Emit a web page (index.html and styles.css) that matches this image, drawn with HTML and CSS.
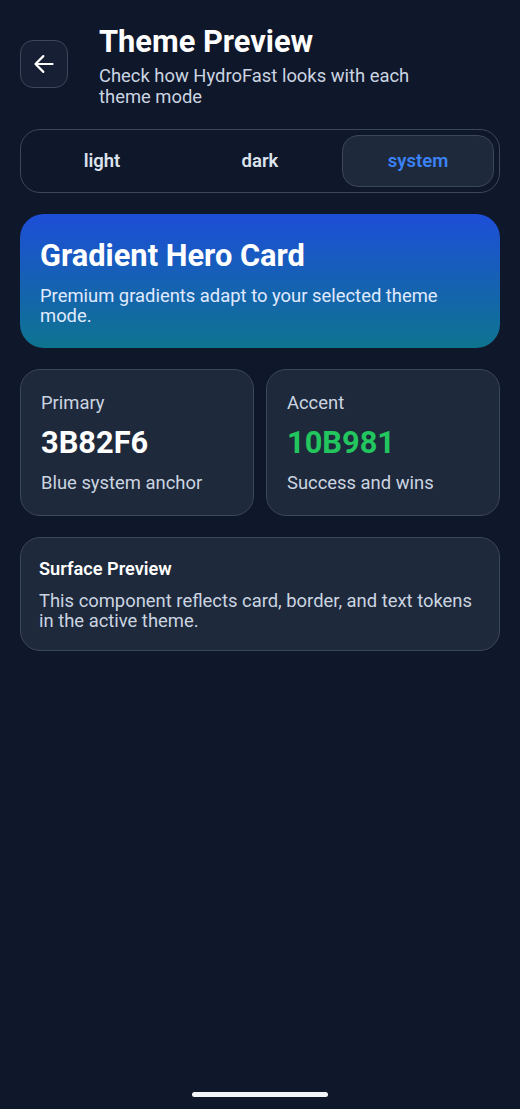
FILE: index.html
```html
<!DOCTYPE html>
<html lang="en">
<head>
<meta charset="utf-8">
<title>Theme Preview</title>
<link rel="stylesheet" href="styles.css">
</head>
<body>
<div class="screen">
  <header class="header">
    <button class="back" aria-label="Back">
      <svg width="28" height="28" viewBox="0 0 512 512" fill="none" stroke="#ffffff" stroke-width="40" stroke-linecap="round" stroke-linejoin="round"><path d="M244 400L100 256l144-144"/><path d="M120 256h292"/></svg>
    </button>
    <div class="head-text">
      <h1 class="title">Theme Preview</h1>
      <p class="subtitle">Check how HydroFast looks with each theme mode</p>
    </div>
  </header>

  <div class="segmented">
    <div class="seg">light</div>
    <div class="seg">dark</div>
    <div class="seg seg-active">system</div>
  </div>

  <section class="hero">
    <h2 class="hero-title">Gradient Hero Card</h2>
    <p class="hero-text">Premium gradients adapt to your selected theme mode.</p>
  </section>

  <div class="swatches">
    <div class="card swatch">
      <div class="sw-label">Primary</div>
      <div class="sw-value">3B82F6</div>
      <div class="sw-desc">Blue system anchor</div>
    </div>
    <div class="card swatch">
      <div class="sw-label">Accent</div>
      <div class="sw-value sw-green">10B981</div>
      <div class="sw-desc">Success and wins</div>
    </div>
  </div>

  <section class="card surface">
    <h3 class="surface-title">Surface Preview</h3>
    <p class="surface-text">This component reflects card, border, and text tokens in the active theme.</p>
  </section>

  <div class="spacer"></div>
  <div class="home-indicator"></div>
</div>
</body>
</html>
```

FILE: styles.css
```css
* { box-sizing: border-box; }
html, body {
  margin: 0;
  padding: 0;
  background: #0F172A;
  font-family: Roboto, "Noto Sans", "Liberation Sans", sans-serif;
  color: #F8FAFC;
}
.screen {
  width: 520px;
  height: 1109px;
  padding: 24px 20px 12px;
  display: flex;
  flex-direction: column;
}
.header {
  display: flex;
  align-items: flex-start;
  gap: 31px;
}
.back {
  margin-top: 16px;
  width: 48px;
  height: 48px;
  flex: none;
  border-radius: 13px;
  border: 1px solid #3B475A;
  background: #161F33;
  display: flex;
  align-items: center;
  justify-content: center;
  padding: 0;
}
.head-text { width: 335px; }
.title {
  margin: 0;
  font-size: 30.8px;
  line-height: 36px;
  font-weight: 700;
  color: #FFFFFF;
}
.subtitle {
  margin: 5px 0 0;
  font-size: 18.4px;
  line-height: 21px;
  color: #CBD5E1;
}
.segmented {
  margin-top: 22px;
  height: 64px;
  border: 1px solid #3B475A;
  border-radius: 20px;
  padding: 5px;
  display: grid;
  grid-template-columns: 1fr 1fr 1fr;
  gap: 6px;
}
.seg {
  display: flex;
  align-items: center;
  justify-content: center;
  font-size: 18.5px;
  font-weight: 600;
  color: #DCE3EC;
  border-radius: 16px;
}
.seg-active {
  background: #1E293B;
  border: 1px solid #3B475A;
  color: #3B82F6;
}
.hero {
  margin-top: 21px;
  height: 134px;
  border-radius: 24px;
  padding: 24px 20px 0;
  background: linear-gradient(180deg, #1D4ED8 0%, #0E7490 100%);
}
.hero-title {
  margin: 0;
  font-size: 30.8px;
  line-height: 36px;
  font-weight: 700;
  color: #FFFFFF;
}
.hero-text {
  margin: 12px 0 0;
  font-size: 18.4px;
  line-height: 20px;
  color: #E0EAFF;
}
.card {
  background: #1E293B;
  border: 1px solid #3B475A;
  border-radius: 20px;
}
.swatches {
  margin-top: 21px;
  display: grid;
  grid-template-columns: 1fr 1fr;
  gap: 12px;
}
.swatch {
  padding: 22px 20px 0;
  height: 147px;
}
.sw-label {
  font-size: 18.4px;
  line-height: 22px;
  color: #CBD5E1;
}
.sw-value {
  margin-top: 11px;
  font-size: 30.8px;
  line-height: 36px;
  font-weight: 700;
  color: #FFFFFF;
}
.sw-green { color: #22C55E; }
.sw-desc {
  margin-top: 11px;
  font-size: 18.4px;
  line-height: 22px;
  color: #CBD5E1;
}
.surface {
  margin-top: 21px;
  height: 114px;
  padding: 20px 18px 0;
}
.surface-title {
  margin: 0;
  font-size: 18.2px;
  line-height: 22px;
  font-weight: 600;
  color: #FFFFFF;
}
.surface-text {
  margin: 11px 0 0;
  font-size: 18.4px;
  line-height: 20px;
  color: #CBD5E1;
}
.spacer { flex: 1; }
.home-indicator {
  align-self: center;
  width: 136px;
  height: 5px;
  border-radius: 3px;
  background: #F1F5F9;
}
```
